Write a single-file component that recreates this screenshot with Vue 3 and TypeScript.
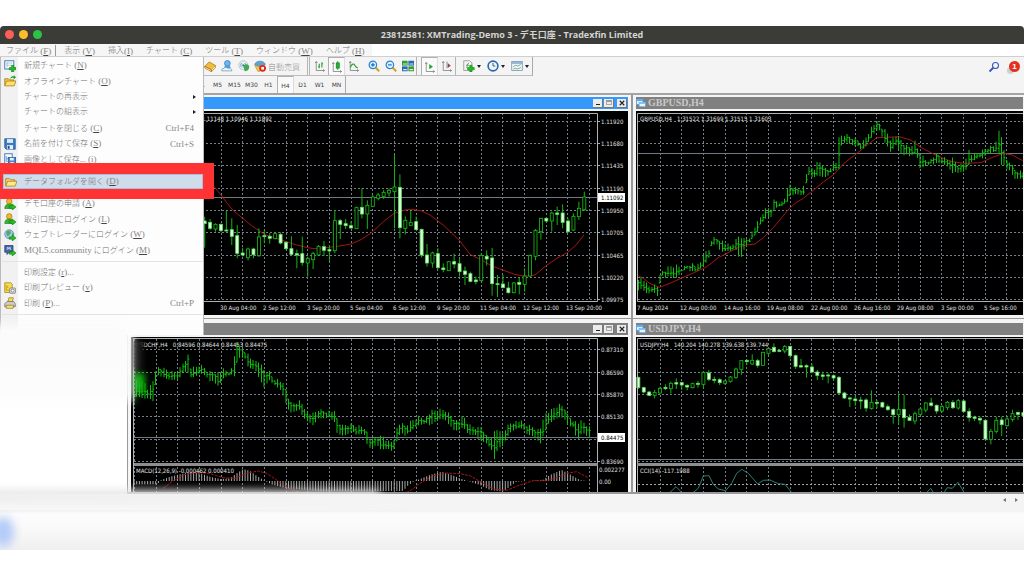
<script setup lang="ts">
type Point = [number, number]
type Row = [number, number, number]
type Candle = [number, number, number, number, number]

interface MenuEntry {
  label: string
  latin?: string
  key?: string
  tail?: string
  shortcut?: string
  icon?: string
  submenu?: boolean
  active?: boolean
}

const menus = [
  { label: 'ファイル', key: 'F', open: true },
  { label: '表示', key: 'V' },
  { label: '挿入', key: 'I' },
  { label: 'チャート', key: 'C' },
  { label: 'ツール', key: 'T' },
  { label: 'ウィンドウ', key: 'W' },
  { label: 'ヘルプ', key: 'H' },
]

const fileGroups: { name: string; items: MenuEntry[] }[] = [
  {
    name: 'charts',
    items: [
      { label: '新規チャート', key: 'N', icon: 'new-chart' },
      { label: 'オフラインチャート', key: 'O', icon: 'folder-up' },
      { label: 'チャートの再表示', submenu: true },
      { label: 'チャートの組表示', submenu: true },
      { label: 'チャートを閉じる', key: 'C', shortcut: 'Ctrl+F4' },
      { label: '名前を付けて保存', key: 'S', shortcut: 'Ctrl+S', icon: 'save' },
      { label: '画像として保存...', key: 'i', icon: 'save-image' },
    ],
  },
  { name: 'folder', items: [{ label: 'データフォルダを開く', key: 'D', icon: 'folder', active: true }] },
  {
    name: 'accounts',
    items: [
      { label: 'デモ口座の申請', key: 'A', icon: 'user-add' },
      { label: '取引口座にログイン', key: 'L', icon: 'user-add' },
      { label: 'ウェブトレーダーにログイン', key: 'W', icon: 'globe-go' },
      { latin: 'MQL5.community', label: ' にログイン', key: 'M', icon: 'mql' },
    ],
  },
  {
    name: 'print',
    items: [
      { label: '印刷設定', key: 'r', tail: '...' },
      { label: '印刷プレビュー', key: 'v', icon: 'preview' },
      { label: '印刷', key: 'P', tail: '...', shortcut: 'Ctrl+P', icon: 'printer' },
    ],
  },
]

const timeframes = ['M1', 'M5', 'M15', 'M30', 'H1', 'H4', 'D1', 'W1', 'MN']

/* Chart samples are kept in thirds of a canvas unit, measured from each chart's origin. */
const eurCandles: Candle[] = [
  [365, 378, 386, 458, 1], [372, 382, 400, 405, 1], [385, 388, 402, 410, 0], [385, 388, 407, 412, 1],
  [348, 405, 407, 410, 1], [370, 404, 424, 450, 1], [390, 422, 475, 490, 1], [458, 474, 480, 484, 1],
  [458, 462, 488, 496, 0], [458, 462, 479, 490, 1], [400, 426, 482, 486, 0], [405, 422, 425, 445, 1],
  [414, 424, 430, 446, 1], [412, 416, 431, 433, 0], [412, 418, 444, 448, 1], [438, 442, 461, 465, 1],
  [424, 461, 478, 480, 1], [464, 476, 480, 520, 1], [425, 476, 503, 512, 1], [485, 490, 504, 545, 0],
  [470, 476, 494, 522, 0], [450, 454, 480, 480, 0], [438, 455, 466, 482, 1], [450, 464, 468, 500, 1],
  [345, 377, 467, 475, 0], [372, 377, 388, 432, 1], [372, 386, 392, 402, 1], [378, 392, 399, 400, 1],
  [335, 338, 401, 401, 0], [280, 337, 357, 370, 1], [316, 331, 357, 402, 0], [300, 306, 334, 336, 0],
  [294, 300, 310, 316, 0], [285, 292, 304, 312, 0], [280, 286, 294, 305, 0], [178, 276, 290, 400, 0],
  [238, 277, 398, 430, 1], [364, 376, 400, 418, 0], [348, 383, 391, 392, 0], [365, 380, 404, 404, 1],
  [401, 403, 480, 488, 1], [447, 480, 504, 515, 1], [470, 474, 504, 518, 0], [460, 476, 518, 522, 1],
  [505, 519, 524, 532, 1], [498, 500, 527, 528, 0], [476, 500, 507, 520, 1], [490, 506, 530, 545, 1],
  [515, 528, 538, 570, 1], [530, 536, 559, 562, 1], [545, 555, 560, 568, 1], [475, 481, 557, 560, 0],
  [466, 484, 492, 512, 1], [459, 489, 566, 602, 1], [540, 566, 568, 606, 1], [540, 567, 578, 580, 1],
  [560, 579, 593, 596, 1], [562, 564, 593, 595, 0], [548, 562, 568, 598, 1], [520, 543, 568, 590, 0],
  [478, 482, 543, 548, 0], [402, 406, 484, 496, 0], [368, 370, 410, 434, 0], [366, 370, 378, 382, 1],
  [350, 354, 378, 410, 0], [335, 354, 358, 390, 1], [328, 354, 382, 400, 1], [370, 378, 410, 414, 1],
  [355, 364, 405, 408, 0], [320, 340, 365, 375, 0], [290, 306, 344, 348, 0],
]
const eurAverage: Point[] = [
  [0, 225], [45, 278], [63, 300], [80, 323], [100, 347], [128, 370], [155, 392], [193, 418], [241, 434],
  [290, 450], [323, 458], [345, 461], [388, 457], [420, 453], [453, 447], [485, 433], [518, 410],
  [550, 380], [583, 355], [615, 345], [635, 343], [665, 348], [690, 360], [730, 390], [779, 437],
  [810, 478], [843, 494], [876, 513], [908, 525], [941, 537], [973, 544], [1005, 540], [1038, 512],
  [1071, 490], [1103, 472], [1130, 448], [1152, 420],
]
const jpyCandles: Candle[] = [
  [185, 187, 218, 222, 1], [215, 218, 231, 235, 1], [228, 231, 241, 243, 1], [225, 232, 241, 250, 0],
  [215, 220, 234, 238, 0], [208, 217, 221, 225, 1], [200, 205, 221, 235, 0], [190, 203, 207, 222, 1],
  [200, 203, 210, 225, 1], [208, 211, 216, 226, 1], [203, 206, 218, 220, 0], [198, 205, 208, 218, 1],
  [168, 172, 208, 220, 0], [165, 174, 193, 198, 1], [185, 193, 196, 205, 1], [190, 194, 203, 210, 1],
  [195, 198, 205, 210, 0], [183, 186, 199, 203, 0], [158, 162, 187, 192, 0], [135, 137, 163, 180, 0],
  [132, 136, 140, 150, 1], [118, 136, 147, 150, 0], [132, 137, 151, 158, 1], [110, 112, 151, 152, 0],
  [98, 100, 115, 122, 0], [85, 97, 110, 112, 1], [102, 106, 109, 112, 1], [90, 95, 108, 115, 0],
  [93, 94, 122, 130, 1], [118, 122, 154, 162, 1], [132, 152, 156, 158, 1], [148, 152, 156, 188, 1],
  [145, 156, 171, 175, 1], [165, 171, 181, 195, 1], [170, 180, 184, 195, 1], [175, 180, 183, 205, 1],
  [178, 182, 189, 195, 1], [183, 187, 234, 240, 1], [230, 234, 249, 252, 1], [245, 249, 252, 276, 1],
  [243, 252, 257, 272, 1], [245, 255, 258, 282, 1], [250, 255, 279, 290, 1], [226, 262, 280, 284, 0],
  [255, 262, 265, 280, 1], [260, 263, 276, 278, 1], [268, 275, 284, 288, 1], [280, 284, 299, 326, 1],
  [235, 283, 299, 328, 0], [240, 283, 308, 338, 1], [298, 307, 316, 318, 1], [290, 296, 318, 328, 0],
  [278, 282, 298, 302, 0], [262, 264, 285, 292, 0], [248, 264, 271, 275, 1], [268, 271, 288, 296, 1],
  [270, 275, 288, 292, 0], [258, 262, 277, 285, 0], [255, 262, 278, 282, 1], [252, 257, 279, 284, 0],
  [255, 258, 289, 293, 1], [280, 289, 308, 320, 1], [302, 306, 310, 318, 1], [305, 310, 315, 328, 1],
  [312, 316, 372, 376, 1], [342, 349, 373, 388, 0], [305, 316, 349, 355, 0], [305, 315, 329, 363, 1],
  [305, 312, 332, 335, 0], [284, 296, 313, 320, 0], [290, 292, 298, 315, 1], [288, 293, 302, 304, 1],
]
const gbpRange: Row[] = [
  [25, 560, 590], [35, 545, 575], [45, 560, 590], [55, 575, 595], [70, 570, 590], [82, 575, 605],
  [88, 540, 590], [92, 530, 545], [105, 530, 545], [118, 515, 540], [130, 515, 548], [142, 512, 548],
  [155, 520, 530], [170, 512, 525], [185, 505, 525], [200, 515, 528], [215, 500, 518], [222, 470, 510],
  [235, 475, 500], [240, 440, 465], [250, 428, 445], [262, 432, 445], [272, 435, 470], [285, 445, 468],
  [300, 455, 470], [315, 440, 465], [325, 425, 480], [333, 425, 485], [345, 435, 455], [360, 425, 440],
  [372, 400, 425], [382, 385, 415], [395, 360, 380], [410, 340, 365], [425, 340, 365], [432, 315, 345],
  [445, 320, 335], [460, 322, 335], [470, 290, 320], [480, 270, 300], [495, 280, 296], [510, 285, 300],
  [520, 280, 305], [530, 232, 262], [538, 208, 240], [550, 230, 245], [562, 205, 240], [575, 203, 245],
  [590, 230, 248], [607, 210, 230], [622, 200, 220], [627, 115, 220], [632, 125, 150], [647, 120, 140],
  [672, 133, 155], [697, 143, 160], [712, 120, 145], [722, 100, 130], [737, 83, 110], [747, 85, 105],
  [757, 100, 130], [770, 110, 145], [782, 135, 170], [797, 125, 150], [804, 115, 160], [817, 145, 185],
  [837, 160, 180], [855, 140, 175], [864, 165, 190], [870, 175, 220], [887, 195, 215], [902, 195, 210],
  [917, 180, 200], [937, 187, 205], [952, 195, 215], [970, 190, 240], [982, 210, 230], [1007, 205, 227],
  [1015, 163, 210], [1027, 180, 200], [1052, 170, 190], [1072, 157, 175], [1097, 150, 170],
  [1107, 105, 180], [1115, 125, 215], [1127, 195, 215], [1142, 200, 225], [1152, 225, 250], [1180, 230, 253],
]
const gbpAverage: Point[] = [
  [25, 542], [40, 550], [60, 566], [88, 577], [120, 565], [155, 549], [190, 534], [230, 515], [265, 488],
  [300, 470], [330, 455], [350, 450], [375, 447], [400, 428], [430, 398], [455, 368], [480, 338],
  [500, 322], [520, 310], [545, 290], [580, 261], [612, 238], [642, 205], [677, 178], [712, 150],
  [740, 128], [772, 127], [807, 125], [842, 135], [872, 157], [912, 178], [962, 199], [1002, 205],
  [1052, 203], [1092, 185], [1122, 175], [1147, 180], [1178, 197],
]
const chfRange: Row[] = [
  [42, 240, 272], [50, 195, 240], [75, 205, 250], [85, 225, 250], [95, 205, 255], [100, 195, 262],
  [108, 160, 205], [113, 158, 185], [125, 162, 180], [140, 165, 190], [155, 172, 195], [175, 170, 195],
  [185, 150, 185], [192, 140, 165], [205, 120, 170], [212, 160, 185], [225, 160, 185], [240, 150, 175],
  [255, 160, 185], [265, 172, 195], [280, 170, 195], [290, 175, 210], [298, 172, 212], [310, 165, 190],
  [325, 170, 185], [340, 160, 180], [345, 95, 180], [350, 75, 140], [360, 100, 125], [375, 108, 130],
  [385, 120, 160], [400, 140, 165], [415, 138, 180], [432, 165, 215], [448, 170, 195], [460, 190, 208],
  [478, 195, 225], [490, 210, 238], [500, 230, 270], [510, 265, 292], [525, 265, 290], [540, 258, 285],
  [550, 270, 315], [565, 295, 315], [580, 298, 330], [595, 285, 310], [615, 290, 312], [635, 290, 310],
  [643, 280, 315], [650, 310, 350], [665, 335, 362], [680, 330, 360], [695, 330, 355], [715, 333, 355],
  [732, 335, 355], [740, 350, 385], [753, 380, 405], [765, 368, 395], [790, 365, 400], [805, 380, 400],
  [820, 380, 412], [828, 345, 385], [840, 325, 360], [855, 335, 358], [875, 318, 345], [895, 305, 332],
  [915, 310, 330], [935, 290, 325], [955, 285, 312], [975, 285, 315], [990, 300, 338], [1015, 322, 345],
  [1030, 302, 335], [1045, 330, 360], [1070, 340, 365], [1085, 335, 375], [1100, 365, 385],
  [1115, 375, 405], [1123, 350, 435], [1132, 342, 410], [1145, 360, 395], [1160, 335, 365],
  [1175, 322, 348], [1200, 318, 340], [1215, 330, 350], [1235, 335, 360], [1250, 345, 370],
  [1260, 345, 390], [1272, 300, 360], [1290, 290, 320], [1305, 278, 310], [1320, 270, 305],
  [1332, 275, 310], [1345, 305, 335], [1360, 315, 340], [1373, 325, 372], [1387, 320, 350], [1410, 340, 372],
]
const macdLevels: Point[] = [
  [42, 508], [112, 508], [120, 497], [150, 485], [180, 478], [210, 472], [240, 475], [270, 485], [300, 492],
  [330, 490], [350, 475], [370, 462], [390, 468], [410, 482], [430, 495], [455, 508], [500, 520],
  [600, 528], [850, 528], [860, 515], [880, 500], [900, 492], [930, 480], [965, 470], [990, 478],
  [1020, 490], [1050, 500], [1080, 510], [1110, 525], [1150, 530], [1175, 510], [1190, 500], [1240, 497],
  [1270, 494], [1290, 480], [1325, 465], [1350, 478], [1380, 495], [1410, 499],
]
const macdSignal: Point[] = [
  [130, 520], [155, 500], [190, 480], [230, 472], [270, 476], [310, 488], [345, 490], [380, 475], [415, 468],
  [440, 475], [470, 495], [505, 520], [560, 540], [840, 540], [870, 528], [900, 505], [940, 482],
  [980, 474], [1020, 476], [1050, 482], [1090, 505], [1120, 522], [1160, 526], [1200, 510], [1240, 497],
  [1280, 497], [1310, 488], [1340, 475], [1370, 470], [1405, 488],
]
const cciLines: Point[][] = [
  [[118, 534], [138, 515], [157, 534]],
  [[188, 534], [205, 520], [220, 483], [237, 482], [250, 508], [265, 522], [287, 527], [305, 505], [320, 475],
    [335, 463], [355, 475], [383, 507], [400, 496], [420, 495], [445, 506], [465, 508], [486, 534]],
  [[889, 534], [902, 520], [911, 534]],
  [[941, 534], [952, 518], [967, 520], [984, 502], [1001, 530]],
]

function linePath(points: Point[], ox: number, oy: number): string {
  return points.map(([x, y], i) => `${i ? 'L' : 'M'}${(ox + x / 3).toFixed(1)} ${(oy + y / 3).toFixed(1)}`).join('')
}

function candleShapes(list: Candle[], ox: number, oy: number, first: number) {
  return list.map(([high, top, bottom, low, solid], i) => ({
    x: ox + (first + i * 16.27) / 3,
    high: oy + high / 3,
    top: oy + top / 3,
    bottom: oy + Math.max(bottom, top + 3) / 3,
    low: oy + low / 3,
    solid: solid === 1,
  }))
}

function between(xs: number[], ys: number[], x: number): number {
  let i = 1
  while (i < xs.length - 1 && xs[i] < x) i++
  const t = Math.min(1, Math.max(0, (x - xs[i - 1]) / (xs[i] - xs[i - 1])))
  return ys[i - 1] + (ys[i] - ys[i - 1]) * t
}

function barPath(rows: Row[], ox: number, oy: number): string {
  const xs = rows.map(r => r[0])
  const highs = rows.map(r => r[1])
  const lows = rows.map(r => r[2])
  const parts: string[] = []
  let previous = (highs[0] + lows[0]) / 2
  for (let x = xs[0], i = 0; x <= xs[xs.length - 1]; x += 8.13, i++) {
    const wobble = ((i * 37) % 11) - 5
    const high = between(xs, highs, x) + wobble
    const low = between(xs, lows, x) + (((i * 53) % 9) - 4)
    const close = high + (low - high) * (0.25 + ((i * 29) % 10) / 20)
    const open = Math.min(low, Math.max(high, previous))
    const px = Math.round((ox + x / 3) * 2) / 2
    parts.push(`M${px} ${(oy + high / 3).toFixed(1)}V${(oy + low / 3).toFixed(1)}`)
    parts.push(`M${px - 1.3} ${(oy + open / 3).toFixed(1)}H${px}M${px} ${(oy + close / 3).toFixed(1)}H${px + 1.3}`)
    previous = close
  }
  return parts.join('')
}

function histogramPath(levels: Point[], ox: number, oy: number, zero: number): string {
  const xs = levels.map(p => p[0])
  const ys = levels.map(p => p[1])
  let d = ''
  for (let x = xs[0]; x <= xs[xs.length - 1]; x += 8.13) {
    d += `M${(ox + x / 3).toFixed(1)} ${oy + zero / 3}V${(oy + between(xs, ys, x) / 3).toFixed(1)}`
  }
  return d
}

function steps(start: number, gap: number, count: number): number[] {
  return Array.from({ length: count }, (_, i) => Math.round(start + gap * i) + 0.5)
}

const columnsLeft = steps(134, 21.67, 22)
const columnsRight = steps(659.5, 21.67, 17)
const rowsUpper = steps(120.5, 22.37, 9)
const rowsLower = steps(349.2, 22.35, 6)

const eurShapes = candleShapes(eurCandles, 200, 95, 14)
const jpyShapes = candleShapes(jpyCandles, 630, 315, 25)
const gbpBars = barPath(gbpRange, 630, 95)
const chfBars = barPath(chfRange, 120, 315)
const macdBars = histogramPath(macdLevels, 120, 315, 498)

const gbpCaption = 'GBPUSD,H4   1.31522 1.31699 1.31515 1.31603'
const chfCaption = 'USDCHF,H4   0.84596 0.84644 0.84453 0.84475'
const jpyCaption = 'USDJPY,H4   140.204 140.278 139.638 139.744'

const eurPrices = ['1.11920', '1.11680', '1.11435', '1.11190', '1.10950', '1.10705', '1.10465', '1.10220', '1.09975']
const chfPrices = ['0.87310', '0.86590', '0.85870', '0.85130', '', '0.83690']
const eurDates = ['30 Aug 04:00', '2 Sep 12:00', '3 Sep 20:00', '5 Sep 04:00', '6 Sep 12:00', '9 Sep 20:00', '11 Sep 04:00', '12 Sep 12:00', '13 Sep 20:00']
const gbpDates = ['7 Aug 2024', '12 Aug 00:00', '14 Aug 16:00', '19 Aug 08:00', '22 Aug 00:00', '26 Aug 16:00', '29 Aug 08:00', '3 Sep 00:00', '5 Sep 16:00']
</script>

<template>
  <svg class="symbols" aria-hidden="true">
    <symbol id="new-chart" viewBox="0 0 16 16">
      <rect x="1" y="1" width="12" height="11" fill="#fff" stroke="#4c86b8" stroke-width="1.4" />
      <path d="M3 4h8M4 3v7M3.500 7h6" stroke="#8cb6d6" fill="none" />
      <path d="M10 7h3v3h3v3h-3v3h-3v-3H7v-3h3z" fill="#25b825" stroke="#0a7d12" stroke-width=".7" />
    </symbol>
    <symbol id="folder" viewBox="0 0 16 16">
      <path d="M1 13V3.500h5l1.500 1.500H13v3" fill="#f6d66a" stroke="#9c7410" />
      <path d="M1 13.500 3.500 7H16l-2.500 6.500z" fill="#ffe88c" stroke="#a87a10" />
    </symbol>
    <symbol id="folder-up" viewBox="0 0 16 16">
      <path d="M1 14V5h5l1.500 1.500H13v2" fill="#f3c94a" stroke="#9c7410" />
      <path d="M1 14.500 3.500 8H16l-2.500 6.500z" fill="#ffdf70" stroke="#a87a10" />
      <path d="M8 5c1-3 3-4 5-3V0l3 3-3 3V4c-2-.7-3 0-5 1z" fill="#22a422" />
    </symbol>
    <symbol id="save" viewBox="0 0 16 16">
      <path d="M1 1h14v14H3l-2-2z" fill="#3d7cc4" stroke="#22568f" />
      <rect x="4" y="1.500" width="8" height="5" fill="#dcebfa" />
      <rect x="4" y="9.500" width="8" height="5.500" fill="#e8eef5" />
      <rect x="5" y="10.500" width="2.500" height="4" fill="#22568f" />
    </symbol>
    <symbol id="save-image" viewBox="0 0 16 16">
      <rect x="1" y="1" width="10" height="13" fill="#fff" stroke="#3d7cc4" stroke-width="1.300" />
      <path d="M3 4v7h3M5 6v3" stroke="#3d7cc4" fill="none" />
      <rect x="6" y="6" width="9.500" height="9.500" fill="#4a88cc" stroke="#22568f" />
      <rect x="8" y="6.500" width="5" height="3.500" fill="#e2eefa" />
      <rect x="8.500" y="12" width="4.500" height="3" fill="#e2eefa" />
    </symbol>
    <symbol id="user-add" viewBox="0 0 16 16">
      <circle cx="7" cy="4.500" r="3.700" fill="#f2b62c" stroke="#a06c08" stroke-width=".8" />
      <path d="M1 14c0-4 2-6 6-6s6 2 6 6z" fill="#34b334" stroke="#128212" stroke-width=".8" />
      <path d="M7 10.500h4v-2.500l5 4-5 4v-2.500H7z" fill="#22c322" stroke="#067006" stroke-width=".7" />
    </symbol>
    <symbol id="globe-go" viewBox="0 0 16 16">
      <circle cx="7" cy="7" r="6" fill="#9fcbee" stroke="#4e87ac" />
      <path d="M3 4c2-3 5-2 6 0s-2 3-3 5-3-1-3-5zM10 5l3 1-1 4z" fill="#55a860" />
      <path d="M7 10.500h4v-2.500l5 4-5 4v-2.500H7z" fill="#22c322" stroke="#067006" stroke-width=".7" />
    </symbol>
    <symbol id="mql" viewBox="0 0 16 16">
      <path d="M1 2h11v9H7l-3 3v-3H1z" fill="#4666a8" stroke="#263f76" />
      <path d="M4 8l1-4 1.500 3L8 4l1 4" stroke="#dce5f5" fill="none" />
      <path d="M7 10.500h4v-2.500l5 4-5 4v-2.500H7z" fill="#22c322" stroke="#067006" stroke-width=".7" />
    </symbol>
    <symbol id="preview" viewBox="0 0 16 16">
      <path d="M1 1h8l2 2v11H1z" fill="#f7dc4c" stroke="#a0871a" />
      <path d="M3 4v7h4M5 5v3" stroke="#b08e1c" fill="none" />
      <rect x="7.500" y="8" width="8" height="7" rx="1" fill="#dcdcdc" stroke="#777" />
      <circle cx="11.500" cy="11.500" r="2" fill="#fff" stroke="#777" />
    </symbol>
    <symbol id="printer" viewBox="0 0 16 16">
      <path d="M5 7 6.500 1h6L11 7z" fill="#f7dc4c" stroke="#a0871a" />
      <path d="M1 9l3-3h9l2 3v4H1z" fill="#ccc" stroke="#6c6c6c" />
      <path d="M3 11h10l-1 4H3z" fill="#f7e27a" stroke="#8e7b24" />
    </symbol>
    <symbol id="book" viewBox="0 0 16 16">
      <path d="M1 8.500 7 2.500l8.500 5L10 13z" fill="#f1bd3a" stroke="#a8720c" />
      <path d="M1 8.500v2l8.700 5V13zM10 13v2.500l5.500-5.500V7.500" fill="#fff0bf" stroke="#a8720c" />
    </symbol>
    <symbol id="person" viewBox="0 0 16 16">
      <circle cx="8.500" cy="4.500" r="3.800" fill="#6db6ee" stroke="#2f79b9" />
      <path d="M5 8h7l1 3H4z" fill="#4f9bdc" />
      <path d="M1 14.500c-.5-2 1-3.500 3-3.200 1-2 4-2 5 0 2-1.500 6 0 5.500 3.200z" fill="#e9f3fb" stroke="#6a9cc0" />
    </symbol>
    <symbol id="signal" viewBox="0 0 16 16">
      <circle cx="7" cy="7" r="6" fill="#e8f0f0" stroke="#a5bfca" />
      <path d="M5 10a4 4 0 0 1 0-6M9 4a4 4 0 0 1 0 6" stroke="#6fa3c4" fill="none" stroke-width="1.300" />
      <path d="M7 8c3-4 8-2 8 1 0 4-3 6-6 6z" fill="#43a852" />
      <circle cx="7" cy="7" r="1.500" fill="#3c7b9c" />
    </symbol>
    <symbol id="auto-trade" viewBox="0 0 16 16">
      <path d="M1 6c1-6 13-6 14 0l-7 4z" fill="#5ba3cf" stroke="#356f93" stroke-width=".7" />
      <path d="M1 7l7 2v6H5z" fill="#f0c84a" stroke="#a17c17" stroke-width=".7" />
      <circle cx="11.500" cy="11" r="4.500" fill="#e1251b" />
      <rect x="9.700" y="9.200" width="3.600" height="3.600" fill="#fff" />
    </symbol>
    <symbol id="bars" viewBox="0 0 16 16">
      <path d="M3 2v12h11M1.500 4 3 2l1.500 2M12 12.500l2 1.500-2 1.500" stroke="#777" fill="none" />
      <path d="M7 5v6M5.500 9H7M10.500 3v7M10.500 5H12" stroke="#1b9c2a" fill="none" stroke-width="1.400" />
    </symbol>
    <symbol id="candle" viewBox="0 0 16 16">
      <path d="M3 2v12h11M1.500 4 3 2l1.500 2M12 12.500l2 1.500-2 1.500" stroke="#777" fill="none" />
      <path d="M9 0v12" stroke="#128520" />
      <rect x="7" y="2.500" width="4" height="7" fill="#1fb52d" stroke="#128520" />
    </symbol>
    <symbol id="line" viewBox="0 0 16 16">
      <path d="M3 2v12h11M1.500 4 3 2l1.500 2M12 12.500l2 1.500-2 1.500" stroke="#777" fill="none" />
      <path d="M3 10c2-6 5-5 6-3s2 3 4 3.500" stroke="#1b9c2a" fill="none" stroke-width="1.400" />
    </symbol>
    <symbol id="zoom-in" viewBox="0 0 16 16">
      <path d="m10 10 5 5" stroke="#d8a521" stroke-width="3" />
      <circle cx="6.500" cy="6.500" r="5" fill="#d9efff" stroke="#2b83cc" stroke-width="1.600" />
      <path d="M4 6.500h5M6.500 4v5" stroke="#1b6cb8" stroke-width="1.500" />
    </symbol>
    <symbol id="zoom-out" viewBox="0 0 16 16">
      <path d="m10 10 5 5" stroke="#d8a521" stroke-width="3" />
      <circle cx="6.500" cy="6.500" r="5" fill="#d9efff" stroke="#2b83cc" stroke-width="1.600" />
      <path d="M4 6.500h5" stroke="#1b6cb8" stroke-width="1.500" />
    </symbol>
    <symbol id="tiles" viewBox="0 0 16 16">
      <rect x="0" y="1" width="7.500" height="6.500" fill="#2f9e36" />
      <rect x="8.500" y="1" width="7.500" height="6.500" fill="#2868b8" />
      <rect x="0" y="8.500" width="7.500" height="6.500" fill="#2868b8" />
      <rect x="8.500" y="8.500" width="7.500" height="6.500" fill="#2f9e36" />
      <path d="M1.500 4.500h5v1.500h-5zM10 4.500h5v1.500h-5zM1.500 12h5v1.500h-5zM10 12h5v1.500h-5z" fill="#d8ecd8" />
    </symbol>
    <symbol id="scroll-end" viewBox="0 0 16 16">
      <path d="M3 2v12h11M1.500 4 3 2l1.500 2M12 12.500l2 1.500-2 1.500" stroke="#777" fill="none" />
      <path d="m7 4 5 3.500L7 11z" fill="#1fa82d" />
    </symbol>
    <symbol id="shift" viewBox="0 0 16 16">
      <path d="M3 2v12h11M1.500 4 3 2l1.500 2M12 12.500l2 1.500-2 1.500M8 2v9" stroke="#777" fill="none" />
      <path d="m9 4 4 3.500-4 3z" fill="#8a4a44" />
    </symbol>
    <symbol id="doc-add" viewBox="0 0 16 16">
      <path d="M1 1h8l3 3v10H1z" fill="#f4f7f4" stroke="#7f8f84" />
      <path d="M4 11c2 0 1-7 4-7M4 7h4" stroke="#687a6e" fill="none" />
      <path d="M9 7h3v3h3v3h-3v3H9v-3H6v-3h3z" fill="#23bd23" stroke="#0a7d12" stroke-width=".7" />
    </symbol>
    <symbol id="clock" viewBox="0 0 16 16">
      <circle cx="8" cy="8" r="6.500" fill="#eef6fd" stroke="#2c68ae" stroke-width="2.200" />
      <path d="M8 4v4h3" stroke="#2c4c78" fill="none" stroke-width="1.200" />
    </symbol>
    <symbol id="template" viewBox="0 0 16 16">
      <rect x="1" y="2" width="14" height="12" fill="#f1f7fc" stroke="#6d8cab" />
      <path d="M1 3h14v2H1z" fill="#7ca3c8" />
      <path d="m3 9 3-2 3 1 4-2M3 12l3-1 3 1 4-2" stroke="#55916a" fill="none" />
    </symbol>
    <symbol id="find" viewBox="0 0 16 16">
      <path d="M7 9 2 14" stroke="#3456b8" stroke-width="2.400" />
      <circle cx="10" cy="6" r="4" fill="#f5f8ff" stroke="#3456b8" stroke-width="1.400" />
    </symbol>
    <symbol id="window-icon" viewBox="0 0 16 16">
      <rect x="1" y="2" width="10" height="8" fill="#e9f5ff" stroke="#4ea0ea" />
      <rect x="1" y="2" width="10" height="3" fill="#58acf2" />
      <rect x="5" y="7" width="10" height="7" fill="#e9f5ff" stroke="#4ea0ea" />
      <rect x="5" y="7" width="10" height="2.500" fill="#7fc1f8" />
    </symbol>
  </svg>

  <div class="page">
    <main class="app">
      <header class="titlebar">
        <span class="lights"><i class="red"></i><i class="amber"></i><i class="green"></i></span>
        <h1>23812581: XMTrading-Demo 3 - デモ口座 - Tradexfin Limited</h1>
      </header>

      <nav class="menubar">
        <div class="menubar-items">
          <button v-for="m in menus" :key="m.key" type="button" :class="{ open: m.open }">
            {{ m.label }}<span class="latin">{{ m.key === 'I' ? '' : ' ' }}(<u>{{ m.key }}</u>)</span>
          </button>
        </div>
      </nav>

      <div class="bars">
        <div class="toolbar">
          <div class="tools">
            <button type="button" class="tool" aria-label="book"><svg><use href="#book" /></svg></button>
            <button type="button" class="tool" aria-label="person"><svg><use href="#person" /></svg></button>
            <button type="button" class="tool" aria-label="signal"><svg><use href="#signal" /></svg></button>
            <button type="button" class="auto"><svg><use href="#auto-trade" /></svg>自動売買</button>
            <span class="divider double"></span>
            <button type="button" class="tool" aria-label="bars"><svg><use href="#bars" /></svg></button>
            <button type="button" class="tool pressed" aria-label="candles"><svg><use href="#candle" /></svg></button>
            <button type="button" class="tool" aria-label="line"><svg><use href="#line" /></svg></button>
            <span class="divider thin"></span>
            <button type="button" class="tool" aria-label="zoom in"><svg><use href="#zoom-in" /></svg></button>
            <button type="button" class="tool" aria-label="zoom out"><svg><use href="#zoom-out" /></svg></button>
            <button type="button" class="tool" aria-label="tile"><svg><use href="#tiles" /></svg></button>
            <span class="divider"></span>
            <button type="button" class="tool pressed" aria-label="scroll"><svg><use href="#scroll-end" /></svg></button>
            <button type="button" class="tool" aria-label="shift"><svg><use href="#shift" /></svg></button>
            <span class="divider"></span>
            <button type="button" class="tool drop" aria-label="indicators"><svg><use href="#doc-add" /></svg><i class="caret"></i></button>
            <button type="button" class="tool drop" aria-label="periods"><svg><use href="#clock" /></svg><i class="caret"></i></button>
            <button type="button" class="tool drop" aria-label="templates"><svg><use href="#template" /></svg><i class="caret"></i></button>
          </div>
          <div class="alerts">
            <button type="button" class="tool" aria-label="search"><svg><use href="#find" /></svg></button>
            <button type="button" class="bell">1</button>
          </div>
        </div>
        <div class="frames">
          <button v-for="t in timeframes" :key="t" type="button" :class="{ pressed: t === 'H4' }">{{ t }}</button>
        </div>
      </div>

      <div class="workspace">
        <aside class="side"></aside>

        <section class="chart-window upper">
          <header class="chart-title active">
            <span class="controls"><button type="button" aria-label="minimize"><i class="min"></i></button><button type="button" aria-label="maximize"><i class="max"></i></button><button type="button" class="close" aria-label="close"><svg viewBox="0 0 8 8"><path d="m1 1 6 6M7 1 1 7" /></svg></button></span>
          </header>
          <svg class="chart" viewBox="131 111 497 204">
            <g class="grid">
              <line v-for="y in rowsUpper" :key="y" x1="134" x2="597" :y1="y" :y2="y" />
              <line v-for="x in columnsLeft" :key="x" y1="113" y2="301" :x1="x" :x2="x" />
            </g>
            <line class="level" x1="134" x2="597" y1="197.500" y2="197.500" />
            <path class="average" :d="linePath(eurAverage, 200, 95)" />
            <g v-for="c in eurShapes" :key="c.x" class="candle">
              <line :x1="c.x" :x2="c.x" :y1="c.high" :y2="c.top" />
              <line :x1="c.x" :x2="c.x" :y1="c.bottom" :y2="c.low" />
              <rect :x="c.x - 1.5" width="3" :y="c.top" :height="c.bottom - c.top" :class="{ solid: c.solid }" />
            </g>
            <path class="frame" d="M133.500 301.500V113.500H597.500V301.500Z" />
            <text x="272" y="121" text-anchor="end">1.11148 1.10946 1.11892</text>
            <g v-for="(p, i) in eurPrices" :key="p">
              <line class="tick" x1="597" x2="600" :y1="rowsUpper[i]" :y2="rowsUpper[i]" />
              <text x="601" :y="rowsUpper[i] + 2.500">{{ p }}</text>
            </g>
            <rect x="598" y="193" width="27" height="9" fill="#fff" />
            <text class="current" x="601" y="200">1.11092</text>
            <text v-for="(d, i) in eurDates" :key="d" :x="220 + Math.round(i * 43.3)" y="310">{{ d }}</text>
          </svg>
        </section>

        <section class="chart-window upper right">
          <header class="chart-title">
            <svg class="badge"><use href="#window-icon" /></svg><h2>GBPUSD,H4</h2>
          </header>
          <svg class="chart" viewBox="636 111 387 204">
            <g class="grid">
              <line v-for="y in rowsUpper" :key="y" x1="638" x2="1023" :y1="y" :y2="y" />
              <line v-for="x in columnsRight" :key="x" y1="113" y2="301" :x1="x" :x2="x" />
            </g>
            <line class="level" x1="638" x2="1023" y1="153.500" y2="153.500" />
            <path class="average" :d="linePath(gbpAverage, 630, 95)" />
            <path class="ohlc" :d="gbpBars" />
            <path class="frame" d="M1023 113.500H637.500V301.500H1023" />
            <text class="caption" x="640" y="121">{{ gbpCaption }}</text>
            <text v-for="(d, i) in gbpDates" :key="d" :x="637 + Math.round(i * 43.4)" y="310">{{ d }}</text>
          </svg>
        </section>

        <section class="chart-window lower">
          <header class="chart-title">
            <span class="controls"><button type="button" aria-label="minimize"><i class="min"></i></button><button type="button" aria-label="maximize"><i class="max"></i></button><button type="button" class="close" aria-label="close"><svg viewBox="0 0 8 8"><path d="m1 1 6 6M7 1 1 7" /></svg></button></span>
          </header>
          <svg class="chart" viewBox="131 337 497 155">
            <g class="grid">
              <line v-for="y in rowsLower" :key="y" x1="134" x2="597" :y1="y" :y2="y" />
              <line v-for="x in columnsLeft" :key="x" y1="339" y2="492" :x1="x" :x2="x" />
            </g>
            <line class="level" x1="134" x2="597" y1="437.500" y2="437.500" />
            <path class="ohlc" :d="chfBars" />
            <path class="histogram" :d="macdBars" />
            <path class="average dashed" :d="linePath(macdSignal, 120, 315)" />
            <path class="frame" d="M133.500 492V338.500H597.500V492" />
            <rect x="134" y="463" width="464" height="3" fill="#8e8e8e" />
            <text class="caption" x="136" y="347">{{ chfCaption }}</text>
            <text x="136" y="473">MACD(12,26,9) -0.000462 0.000410</text>
            <g v-for="(p, i) in chfPrices" :key="i">
              <line class="tick" x1="597" x2="600" :y1="rowsLower[i]" :y2="rowsLower[i]" />
              <text x="601" :y="rowsLower[i] + 2.500">{{ p }}</text>
            </g>
            <rect x="598" y="433" width="27" height="9" fill="#fff" />
            <text class="current" x="601" y="440">0.84475</text>
            <text x="599" y="472">0.002277</text>
            <text x="599" y="484">0.00</text>
          </svg>
        </section>

        <section class="chart-window lower right">
          <header class="chart-title">
            <svg class="badge"><use href="#window-icon" /></svg><h2>USDJPY,H4</h2>
          </header>
          <svg class="chart" viewBox="636 337 387 155">
            <g class="grid">
              <line v-for="y in rowsLower" :key="y" x1="638" x2="1023" :y1="y" :y2="y" />
              <line v-for="x in columnsRight" :key="x" y1="339" y2="492" :x1="x" :x2="x" />
              <line class="bright" x1="638" x2="1023" y1="484.500" y2="484.500" />
            </g>
            <line class="level" x1="638" x2="1023" y1="459.500" y2="459.500" />
            <path v-for="(l, i) in cciLines" :key="i" class="cci" :d="linePath(l, 630, 315)" />
            <g v-for="c in jpyShapes" :key="c.x" class="candle">
              <line :x1="c.x" :x2="c.x" :y1="c.high" :y2="c.top" />
              <line :x1="c.x" :x2="c.x" :y1="c.bottom" :y2="c.low" />
              <rect :x="c.x - 1.5" width="3" :y="c.top" :height="c.bottom - c.top" :class="{ solid: c.solid }" />
            </g>
            <path class="frame" d="M1023 338.500H637.500V492" />
            <rect x="637" y="463" width="386" height="3" fill="#8e8e8e" />
            <text class="caption" x="640" y="347">{{ jpyCaption }}</text>
            <text x="640" y="473">CCI(14) -117.1988</text>
          </svg>
        </section>

        <div class="shade"></div>
        <div class="smear"></div>
        <div class="haze"></div>
        <div class="haze-floor"></div>
      </div>

      <div class="tabs">
        <button type="button" aria-label="previous" class="prev"></button>
        <button type="button" aria-label="next" class="next"></button>
      </div>
      <footer class="status"><span class="glow"></span></footer>

      <div class="file-menu">
        <ul v-for="g in fileGroups" :key="g.name" :class="g.name">
          <li v-for="(item, i) in g.items" :key="i">
            <button type="button" :class="{ active: item.active }">
              <span class="gutter"><svg v-if="item.icon"><use :href="'#' + item.icon" /></svg></span>
              <span class="label"><span v-if="item.latin" class="latin">{{ item.latin }}</span>{{ item.label }}<span v-if="item.key" class="latin">{{ ' ' }}(<u>{{ item.key }}</u>){{ item.tail }}</span></span>
              <span v-if="item.shortcut" class="latin">{{ item.shortcut }}</span>
              <i v-if="item.submenu" class="arrow"></i>
            </button>
          </li>
        </ul>
        <div class="marker"></div>
      </div>
      <div class="menu-fade"></div>
    </main>
  </div>
</template>

<style>
body {
  background: #fff;
}
</style>

<style scoped>
* {
  box-sizing: border-box;
}
button {
  font: inherit;
  color: inherit;
  background: none;
  border: 0;
  padding: 0;
  margin: 0;
}
ul {
  list-style: none;
  margin: 0;
  padding: 0;
}
.symbols {
  position: absolute;
  width: 0;
  height: 0;
}
.page {
  padding: 26px 0;
  overflow: hidden;
}
.app {
  position: relative;
  font-family: "Liberation Serif", "Noto Sans CJK JP", serif;
  font-size: 8px;
  font-weight: 300;
  color: #707070;
}
.latin {
  font-size: 9px;
  color: #868686;
  white-space: pre;
}
.latin u {
  text-decoration-color: #444;
}

.titlebar {
  display: flex;
  align-items: center;
  justify-content: center;
  height: 18px;
  background: #3b3b38;
  border-radius: 4px 4px 0 0;
  position: relative;
}
.titlebar h1 {
  margin: 0;
  font: bold 9px/18px "Open Sans", "Noto Sans CJK JP", sans-serif;
  color: #d4d4d2;
}
.lights {
  position: absolute;
  left: 5px;
  top: 4px;
  display: flex;
  gap: 5px;
}
.lights i {
  width: 9px;
  height: 9px;
  border-radius: 50%;
}
.red { background: #fb5f57; }
.amber { background: #fdbc2e; }
.green { background: #2bc440; }

.menubar {
  height: 12px;
  background: #fff;
}
.menubar-items {
  display: inline-flex;
  gap: 13px;
  height: 12px;
  padding: 1px 8px 0 6px;
  background: #f6f6f6;
  line-height: 12px;
  vertical-align: top;
}
.menubar-items button {
  white-space: nowrap;
  display: flex;
  align-items: center;
}
.menubar-items .open {
  box-shadow: 4px 0 0 #f6f6f6, 5px 0 0 #999;
}

.bars {
  height: 39px;
  background: #f4f4f4;
  border-top: 1px solid #cfcfcf;
  border-bottom: 2px solid #a4a4a4;
}
.toolbar {
  display: flex;
  justify-content: space-between;
  height: 19px;
}
.tools {
  display: flex;
  align-items: stretch;
  padding-left: 201px;
  border-right: 1px solid #aaa;
  border-bottom: 1px solid #bdbdbd;
}
.tool {
  display: flex;
  align-items: center;
  justify-content: center;
  width: 17px;
}
.tool svg,
.auto svg {
  width: 12px;
  height: 12px;
}
.auto {
  display: flex;
  align-items: center;
  gap: 2px;
  width: 53px;
  padding-left: 2px;
  color: #8c8c8c;
  white-space: nowrap;
}
.auto svg {
  flex: none;
}
.divider {
  width: 5px;
  border-left: 1px solid #b5b5b5;
}
.divider.double {
  width: 3px;
  margin: 0 1px 0 2px;
  border-right: 1px solid #b5b5b5;
}
.divider.thin {
  width: 3px;
  border: 0;
}
.pressed {
  background: #fafafa;
  border: 1px solid #b0b0b0;
  border-right-color: #ddd;
  border-bottom: 0;
}
.drop {
  width: 24px;
  gap: 2px;
}
.caret {
  border: 2px solid transparent;
  border-top: 3px solid #222;
  border-bottom: 0;
}
.alerts {
  display: flex;
  align-items: center;
  gap: 7px;
  padding-right: 4px;
}
.bell {
  width: 11px;
  height: 11px;
  border-radius: 50%;
  background: #e2321f;
  color: #fff;
  font: bold 8px/11px "Liberation Sans", sans-serif;
  text-align: center;
  box-shadow: -4px 4px 0 -2px #d0d0d0;
}
.frames {
  display: inline-flex;
  height: 17px;
  padding-left: 192px;
  border-right: 1px solid #aaa;
  vertical-align: top;
}
.frames button {
  width: 17px;
  font: 6px/17px "DejaVu Sans", sans-serif;
  color: #444;
  text-align: center;
}
.frames .pressed {
  line-height: 15px;
}

.workspace {
  position: relative;
  display: grid;
  grid-template-columns: 127px 505fr 392fr;
  background: #eee;
}
.side {
  grid-row: 1 / 3;
  background: #fff;
}
.chart-window {
  background: #f4f4f4;
  border-left: 1px solid #999;
  padding: 2px 3px 3px;
  border-bottom: 1px solid #999;
  min-width: 0;
}
.chart-window:not(.right) {
  border-right: 1px solid #999;
}
.chart-window.right {
  padding-right: 1px;
}
.chart-window.lower {
  padding-top: 4px;
  padding-bottom: 0;
  border-bottom: 2px solid #999;
}
.chart-title {
  display: flex;
  align-items: center;
  height: 12px;
  margin-bottom: 2px;
  background: #808080;
}
.chart-title.active {
  background: #3598fb;
}
.chart-title h2 {
  margin: 0 0 0 2px;
  font: bold 10px/12px "Liberation Serif", serif;
  color: #c9c9c9;
}
.badge {
  width: 10px;
  height: 10px;
}
.controls {
  display: flex;
  gap: 1px;
  margin-left: auto;
  padding-right: 1px;
}
.controls button {
  width: 10px;
  height: 9px;
  background: #ececec;
  border-right: 1px solid #777;
  border-bottom: 1px solid #777;
  display: flex;
  align-items: center;
  justify-content: center;
}
.controls .close {
  margin-left: 2px;
}
.controls svg {
  width: 6px;
  height: 6px;
  stroke: #222;
  stroke-width: 1.5;
}
.min {
  width: 4px;
  height: 1px;
  background: #222;
  margin-top: 4px;
}
.max {
  width: 6px;
  height: 5px;
  border: 1px solid #aaa;
  border-top: 2px solid #999;
}

.chart {
  display: block;
  width: 100%;
  height: auto;
  background: #000;
}
.chart text {
  font: 6px "DejaVu Sans Condensed", "Liberation Sans", sans-serif;
  fill: #e0e0e0;
}
.chart .caption {
  white-space: pre;
}
.chart .current {
  fill: #000;
}
.grid line {
  stroke: #75808a;
  stroke-width: 1;
  stroke-dasharray: 2 2;
}
.grid .bright {
  stroke: #a5a5a5;
}
.level {
  stroke: #6f7a85;
}
.frame {
  fill: none;
  stroke: #b0b0b0;
}
.tick {
  stroke: #b0b0b0;
}
.average {
  fill: none;
  stroke: #a51414;
}
.dashed {
  stroke-dasharray: 3 1;
}
.candle line {
  stroke: #12b412;
}
.candle rect {
  fill: #000;
  stroke: #16c416;
  stroke-width: 0.8;
}
.candle .solid {
  fill: #dcffdc;
  stroke: #5be05b;
}
.ohlc {
  fill: none;
  stroke: #0fbe0f;
  stroke-width: 1;
}
.histogram {
  fill: none;
  stroke: #a8a8a8;
  stroke-width: 1;
}
.cci {
  fill: none;
  stroke: #2d7f78;
}

.haze {
  position: absolute;
  left: -20px;
  top: 232px;
  width: 152px;
  height: 74px;
  background: #fcfcfc;
  filter: blur(5px);
}
.shade {
  position: absolute;
  left: 133px;
  top: 246px;
  width: 11px;
  height: 28px;
  background: #111;
  filter: blur(2px);
}
.smear {
  position: absolute;
  left: 134px;
  top: 278px;
  width: 11px;
  height: 20px;
  background: #0bb00b;
  filter: blur(3px);
}
.haze-floor {
  position: absolute;
  left: -20px;
  bottom: -10px;
  width: 400px;
  height: 14px;
  background: #e6e6e6;
  filter: blur(4px);
}
.tabs {
  position: relative;
  display: flex;
  justify-content: flex-end;
  align-items: center;
  gap: 9px;
  height: 16px;
  padding: 0 6px 4px 0;
  background: linear-gradient(90deg, rgba(244, 244, 244, 0.6), #f4f4f4 40%);
}
.tabs button {
  border: 2px solid transparent;
}
.tabs .prev {
  border-left: 0;
  border-right: 3px solid #777;
}
.tabs .next {
  border-right: 0;
  border-left: 3px solid #777;
}
.status {
  position: relative;
  height: 40px;
  overflow: hidden;
  background: linear-gradient(#f0f0f0, #fcfcfc 10%, #fafafa 40%, #efefef);
}
.glow {
  position: absolute;
  left: -8px;
  top: 7px;
  width: 22px;
  height: 30px;
  border-radius: 50%;
  background: #b3cbf7;
  filter: blur(5px);
}

.file-menu {
  position: absolute;
  left: 0;
  top: 31px;
  width: 204px;
  height: 278px;
  padding: 1px 0 0 1px;
  background: linear-gradient(90deg, #f1f1f1 17px, #fdfdfd 17px);
  border-left: 1px solid #bbb;
  border-right: 1px solid #bbb;
}
.file-menu ul {
  display: grid;
  grid-auto-rows: 1fr;
}
.charts {
  height: 109px;
}
.file-menu .folder {
  margin: 7px 0 7px 1px;
  height: 15px;
}
.accounts {
  height: 62px;
}
.file-menu .print {
  height: 54px;
  padding: 3px 0 3px;
  margin-top: 3px;
  border-top: 1px solid #e4e4e4;
  border-bottom: 1px solid #e4e4e4;
}
.file-menu li {
  display: flex;
  min-height: 0;
}
.file-menu button {
  display: flex;
  align-items: center;
  width: 100%;
  padding-right: 9px;
  text-align: left;
  white-space: nowrap;
  line-height: 12px;
}
.file-menu .active {
  background: #cfdcec;
  border: 1px solid #a9bfdc;
}
.gutter {
  display: flex;
  align-items: center;
  justify-content: center;
  width: 16px;
  margin-right: 6px;
}
.folder .gutter {
  width: 14px;
}
.gutter svg {
  width: 12px;
  height: 12px;
}
.label {
  flex: 1;
}
.arrow {
  border: 2px solid transparent;
  border-left: 3px solid #222;
  border-right: 0;
  margin-right: -2px;
}
.marker {
  position: absolute;
  left: -1px;
  top: 106px;
  width: 214px;
  height: 36px;
  border: solid #ff3333;
  border-width: 11px 11px 10px 3px;
}
.menu-fade {
  position: absolute;
  left: -20px;
  top: 298px;
  width: 146px;
  height: 50px;
  background: #fbfbfb;
  filter: blur(4px);
}
</style>
